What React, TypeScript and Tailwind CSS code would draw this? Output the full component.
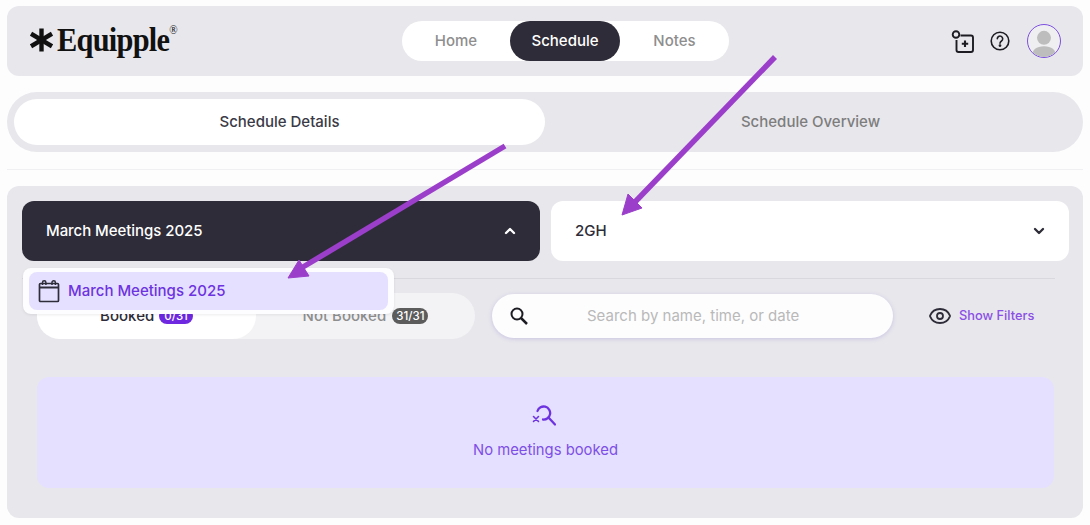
// Schedule page with the meeting selector open and two annotation arrows on top.

import { ChevronDown, ChevronUp, Eye } from "lucide-react";

function LogoMark() {
  return (
    <svg width="23" height="24" viewBox="0 0 22 22" className="text-[#111]">
      <g stroke="currentColor" strokeWidth="4.2" strokeLinecap="butt">
        <line x1="11" y1="0" x2="11" y2="22" />
        <line x1="1" y1="5" x2="21" y2="17" />
        <line x1="1" y1="17" x2="21" y2="5" />
      </g>
    </svg>
  );
}

function BuilderIcon() {
  return (
    <svg width="24" height="24" viewBox="0 0 24 24" fill="none" stroke="#1c1c22" strokeWidth="1.9">
      <path d="M10.5 6.500h10.500a2 2 0 0 1 2 2V21a2 2 0 0 1-2 2H8.500a2 2 0 0 1-2-2V11" />
      <circle cx="6" cy="5.500" r="3.300" />
      <path d="M15 11.500v6.500M11.800 14.700h6.400" strokeWidth="2.100" />
    </svg>
  );
}

function HelpIcon() {
  return (
    <svg width="20" height="20" viewBox="0 0 20 20" fill="none" stroke="#1c1c22" strokeWidth="1.6">
      <circle cx="10" cy="10" r="8.800" />
      <path d="M7.300 7.800a2.700 2.700 0 1 1 4.200 2.200c-1 .7-1.500 1.100-1.500 2.300" strokeLinecap="round" />
      <circle cx="10" cy="14.600" r="0.600" fill="#1c1c22" />
    </svg>
  );
}

function AvatarIcon() {
  return (
    <svg width="28" height="28" viewBox="0 0 30 30" fill="#bdbdbd">
      <circle cx="15" cy="9.500" r="7.500" />
      <path d="M2 30c0-8 5-11.500 13-11.500S28 22 28 30z" />
    </svg>
  );
}

function CalendarIcon() {
  return (
    <svg width="22" height="24" viewBox="0 0 22 24" fill="none" stroke="#2e2c38" strokeWidth="1.700">
      <rect x="1.500" y="4.500" width="19" height="18" rx="1" />
      <path d="M1.500 8.500h19" strokeWidth="2" />
      <path d="M4.500 6V3.500a1.700 1.700 0 0 1 3.400 0V6M14 6V3.500a1.700 1.700 0 0 1 3.400 0V6" strokeWidth="1.500" />
    </svg>
  );
}

function SearchIcon() {
  return (
    <svg width="18" height="18" viewBox="0 0 18 18" fill="none" stroke="#1c1c22" strokeWidth="2">
      <circle cx="7" cy="7" r="5.500" />
      <path d="M11 11l6 6" strokeWidth="2.500" />
    </svg>
  );
}

function SearchMissIcon() {
  return (
    <svg width="24" height="21" viewBox="0 0 24 21" fill="none" stroke="#6d33e0" strokeWidth="2.300" strokeLinecap="round">
      <path d="M5.500 6a6.500 6.500 0 1 1 5.500 8.500" />
      <path d="M16.500 12.500l6.500 7" />
      <path d="M1.500 11.500l5 5M6.500 11.500l-5 5" strokeWidth="1.600" />
    </svg>
  );
}

// Annotation arrows drawn over the page
function Arrows() {
  return (
    <svg width="1090" height="525" viewBox="0 0 1090 525" className="absolute left-0 top-0 pointer-events-none">
      <g fill="#9b3fcb" stroke="#9b3fcb">
        <line x1="505" y1="146" x2="303" y2="267" strokeWidth="5.500" />
        <polygon points="288,278 299,260 309,276" strokeWidth="1" />
        <line x1="775" y1="57" x2="634" y2="203" strokeWidth="5.500" />
        <polygon points="622,215 628,194 642,208" strokeWidth="1" />
      </g>
    </svg>
  );
}

export default function App() {
  return (
    <div
      className="relative w-[1090px] h-[525px] overflow-hidden bg-[#fdfdfd] px-[7px] pt-[6px]"
      style={{ fontFamily: "Inter, 'Noto Sans', sans-serif" }}
    >
      <header className="relative h-[70px] rounded-xl bg-[#e8e7ec] flex items-center justify-between pl-[23px] pr-[22px]">
        <div className="flex items-center gap-[4px] -mt-[2px]">
          <LogoMark />
          <span
            className="relative inline-block origin-left scale-x-[0.92] text-[33px] leading-none font-bold tracking-[-0.8px] text-[#111]"
            style={{ fontFamily: "'Liberation Serif', serif" }}
          >
            Equipple
            <span className="absolute -right-[9px] top-[0px] text-[12px] font-normal tracking-normal">®</span>
          </span>
        </div>

        <nav className="absolute left-[395px] top-[15px] w-[327px] h-[40px] rounded-full bg-white flex items-center text-[15px] font-medium">
          <button type="button" className="w-[108px] h-full text-[#8e8e8e]">Home</button>
          <button type="button" className="w-[110px] h-full rounded-full bg-[#2e2c38] text-white">Schedule</button>
          <button type="button" className="w-[109px] h-full text-[#8e8e8e]">Notes</button>
        </nav>

        <div className="flex items-center">
          <BuilderIcon />
          <span className="ml-[16px]"><HelpIcon /></span>
          <div className="ml-[17px] w-[34px] h-[34px] rounded-full border-[1.5px] border-[#7c4fe0] bg-[#efeff2] overflow-hidden flex items-end justify-center">
            <AvatarIcon />
          </div>
        </div>
      </header>

      <div className="mt-[16px] h-[60px] rounded-[30px] bg-[#e8e7ec] p-[7px] flex text-[15px] font-medium">
        <button type="button" className="w-[531px] rounded-full bg-white text-[#3a3a46]">Schedule Details</button>
        <button type="button" className="flex-1 text-[#7d7d7d]">Schedule Overview</button>
      </div>

      <div className="mt-[17px] h-px bg-[#f0f0f2]" />

      <section className="relative mt-[16px] h-[332px] rounded-xl bg-[#e8e7ec] px-[15px] pt-[15px]">
        <div className="flex gap-[11px] w-[1047px] text-[15px] font-medium">
          <div className="w-[518px] h-[60px] rounded-xl bg-[#2e2c38] text-white flex items-center justify-between pl-[24px] pr-[22px]">
            <span className="tracking-[-0.05px]">March Meetings 2025</span>
            <ChevronUp size={16} strokeWidth={3.500} />
          </div>
          <div className="w-[518px] h-[60px] rounded-xl bg-white text-[#2e2c38] flex items-center justify-between pl-[24px] pr-[22px]">
            <span>2GH</span>
            <ChevronDown size={16} strokeWidth={3.500} />
          </div>
        </div>

        <div className="mt-[17px] h-px w-[1033px] bg-[#d9d8de]" />

        <div className="mt-[14px] pl-[15px] flex items-center">
          <div className="w-[438px] h-[46px] rounded-[23px] bg-[#f3f3f6] flex text-[15px] font-medium">
            <div className="w-[219px] rounded-[23px] bg-white text-[#2e2c38] flex items-center justify-center gap-[5px]">
              Booked
              <span className="rounded-full bg-[#6d28e0] text-white text-[11.500px] px-[5px] leading-[16px]">0/31</span>
            </div>
            <div className="flex-1 text-[#8e8e8e] flex items-center justify-center gap-[6px]">
              Not Booked
              <span className="rounded-full bg-[#5c5c5c] text-white text-[11.500px] px-[4px] leading-[16px]">31/31</span>
            </div>
          </div>

          <div className="ml-[17px] w-[401px] h-[44px] rounded-[22px] bg-[#fdfdfe] shadow-[0_1px_4px_rgba(110,90,200,0.25)] flex items-center pl-[18px] text-[15px]">
            <SearchIcon />
            <span className="ml-[59px] text-[#b9b9b9]">Search by name, time, or date</span>
          </div>

          <div className="ml-[35px] flex items-center gap-[7px] text-[12.800px] font-medium text-[#8b4fe6]">
            <Eye size={24} strokeWidth={1.800} className="text-[#2e2c38]" />
            <span>Show Filters</span>
          </div>
        </div>

        <div className="mt-[38px] ml-[15px] w-[1017px] h-[111px] rounded-xl bg-[#e5e0ff] flex flex-col items-center pt-[28px]">
          <span className="-ml-[4px]"><SearchMissIcon /></span>
          <p className="mt-[13px] text-[14.800px] text-[#7d4fe6]">No meetings booked</p>
        </div>

        <div className="absolute left-[16px] top-[82px] w-[371px] h-[46px] rounded-lg bg-[#fdfdff] px-[6px] py-[4px] shadow-[0_1px_3px_rgba(0,0,0,0.08)]">
          <div className="h-[38px] rounded-lg bg-[#e5e0ff] flex items-center pl-[9px] gap-[8px] text-[15px] font-medium text-[#6d33e0]">
            <CalendarIcon />
            <span>March Meetings 2025</span>
          </div>
        </div>
      </section>

      <Arrows />
    </div>
  );
}
